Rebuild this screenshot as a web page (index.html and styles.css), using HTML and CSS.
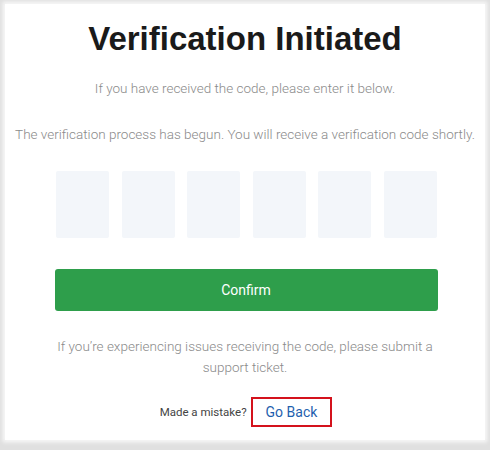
FILE: index.html
```html
<!DOCTYPE html>
<html>
<head>
<meta charset="utf-8">
<link rel="stylesheet" href="styles.css">
</head>
<body>
<div class="page">
  <div class="card">
    <h1 class="title">Verification Initiated</h1>
    <p class="sub sub-first">If you have received the code, please enter it below.</p>
    <p class="sub sub-second">The verification process has begun. You will receive a verification code shortly.</p>
    <div class="code-row">
      <div class="code-box"></div>
      <div class="code-box"></div>
      <div class="code-box"></div>
      <div class="code-box"></div>
      <div class="code-box"></div>
      <div class="code-box"></div>
    </div>
    <button class="confirm">Confirm</button>
    <p class="help">If you’re experiencing issues receiving the code, please submit a support ticket.</p>
    <div class="back-row">
      <span class="mistake">Made a mistake?</span>
      <a class="go-back">Go Back</a>
    </div>
  </div>
</div>
</body>
</html>
```
FILE: styles.css
```css
html, body {
  margin: 0;
  padding: 0;
}
body {
  width: 490px;
  height: 450px;
  overflow: hidden;
  background: #dcdcdc;
  font-family: Roboto, "Liberation Sans", sans-serif;
}
.page {
  height: 450px;
  padding: 4px 5px 0 5px;
  box-sizing: border-box;
  background: #e0e0e0;
}
.card {
  height: 436px;
  background: #fff;
  box-shadow: 0 0 4px 2px rgba(255,255,255,0.9), 0 0 2px rgba(0,0,0,0.1);
  display: flex;
  flex-direction: column;
  align-items: center;
  box-sizing: border-box;
  padding-top: 15px;
}
.title {
  margin: 0;
  font-family: "Liberation Sans", Arial, sans-serif;
  font-weight: bold;
  font-size: 33px;
  line-height: 40px;
  color: #1a1a1a;
}
.sub {
  margin: 0;
  font-size: 13.5px;
  font-weight: 300;
  color: #8a8a8a;
  line-height: 20px;
}
.sub-first {
  margin-top: 19px;
}
.sub-second {
  margin-top: 26px;
}
.code-row {
  display: flex;
  gap: 12.6px;
  margin-top: 27px;
  margin-left: 3px;
}
.code-box {
  width: 53px;
  height: 67px;
  background: #f3f6fa;
  border-radius: 2px;
}
.confirm {
  margin-top: 31px;
  width: 383px;
  height: 42px;
  margin-left: 2px;
  border: none;
  border-radius: 3px;
  background: #2e9e4b;
  color: #fff;
  font-family: Roboto, "Liberation Sans", sans-serif;
  font-size: 14px;
  font-weight: 400;
}
.help {
  margin: 25px 0 0 0;
  width: 390px;
  text-align: center;
  font-size: 13.5px;
  font-weight: 300;
  color: #8a8a8a;
  line-height: 21px;
}
.back-row {
  display: flex;
  align-items: center;
  margin-top: 19px;
  margin-left: 2px;
}
.mistake {
  font-size: 11.5px;
  color: #444;
  margin-right: 4px;
}
.go-back {
  display: inline-block;
  border: 2px solid #d4121c;
  padding: 6px 13px 6px 13px;
  font-size: 14px;
  line-height: 14px;
  color: #1f5fae;
}
```
